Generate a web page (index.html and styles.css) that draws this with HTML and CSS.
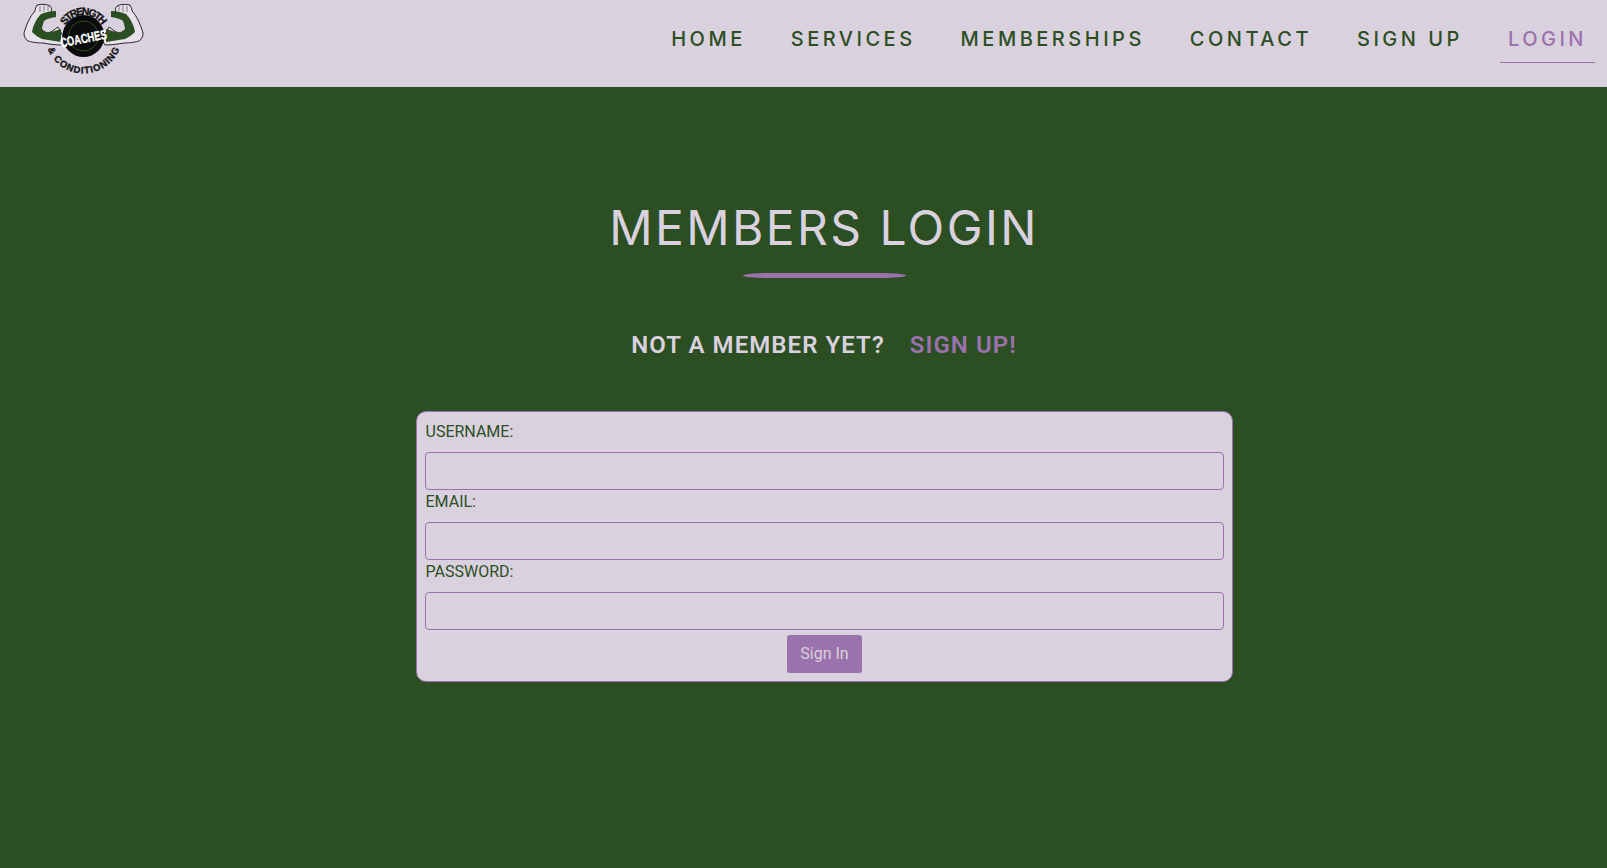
FILE: index.html
```html
<!DOCTYPE html>
<html lang="en">
<head>
<meta charset="utf-8">
<title>Members Login</title>
<link rel="stylesheet" href="styles.css">
</head>
<body>
<header class="site-header">
  <a class="logo" href="#" aria-label="Strength Coaches and Conditioning">
    <svg viewBox="0 0 122 74" width="122" height="74">
      <defs>
        <path id="arc-top" d="M39.5 34 A21 21 0 0 1 81.5 34"/>
        <path id="arc-bottom" d="M22 33 A38 38 0 0 0 99 33"/>
        <g id="arm">
          <path class="arm" d="M14 3 C18 2 24 2 27 4 C29 6 29 9 28 10 C24 12 20 13 17 15 C15 19 14 23 14 26 C18 30 21 32 25 31 C29 30 32 27 35 25 L42 38 L39 43 C32 43 26 42 20 41 C14 41 8 40 5 39 C2 37 1 34 1 31 C3 24 7 14 12 9 C12 7 13 5 14 3 Z"/>
          <path class="muscle" d="M9 30 C10 24 13 17 18 12 C23 10 28 9 33 9 L33 15 C27 16 23 17 21 19 C20 22 19 25 19 27 C22 30 25 31 28 30 C32 29 35 28 38 27 L38 40 C32 39 25 38 19 37 C15 35 12 33 9 30 Z"/>
          <path class="fist-line" d="M17 4 L17 10 M21 3.5 L21 10 M25 4 L25 9"/>
        </g>
      </defs>
      <use href="#arm"/>
      <use href="#arm" transform="translate(121 0) scale(-1 1)"/>
      <circle class="plate" cx="60.5" cy="34" r="21"/>
      <circle class="plate-ring" cx="60.5" cy="34" r="15"/>
      <text class="logo-arc"><textPath href="#arc-top" startOffset="50%" text-anchor="middle" textLength="44">STRENGTH</textPath></text>
      <text class="logo-arc small"><textPath href="#arc-bottom" startOffset="50%" text-anchor="middle" textLength="92">&amp; CONDITIONING</textPath></text>
      <text class="logo-coaches" x="60.5" y="41" text-anchor="middle" textLength="47" lengthAdjust="spacingAndGlyphs" transform="rotate(-11 60.5 37)">COACHES</text>
    </svg>
  </a>
  <nav class="main-nav">
    <a href="#">HOME</a>
    <a href="#">SERVICES</a>
    <a href="#">MEMBERSHIPS</a>
    <a href="#">CONTACT</a>
    <a href="#">SIGN UP</a>
    <a class="active" href="#">LOGIN</a>
  </nav>
</header>
<main class="content">
  <h1 class="page-title">MEMBERS LOGIN</h1>
  <hr class="title-rule">
  <p class="signup-line">NOT A MEMBER YET? <a href="#">SIGN UP!</a></p>
  <form class="login-form">
    <label for="username">USERNAME:</label>
    <input id="username" type="text">
    <label for="email">EMAIL:</label>
    <input id="email" type="email">
    <label for="password">PASSWORD:</label>
    <input id="password" type="password">
    <button type="button">Sign In</button>
  </form>
</main>
</body>
</html>
```
FILE: styles.css
```css
* { box-sizing: border-box; }
html, body { height: 100%; }
body {
  margin: 0;
  background: #2c4e23;
  color: #2c4e23;
  font-family: Roboto, "Liberation Sans", sans-serif;
  overflow: hidden;
}
a { text-decoration: none; color: inherit; }

.site-header {
  height: 87px;
  background: #dad1df;
  display: flex;
  justify-content: space-between;
  align-items: flex-start;
  padding: 2px 12px 0 23px;
}
.logo { display: block; height: 74px; }
.arm { fill: #e6e1ea; stroke: #111; stroke-width: .9; }
.muscle { fill: #2c4e23; }
.fist-line { fill: none; stroke: #333; stroke-width: .6; }
.plate { fill: #0b0b0b; }
.plate-ring { fill: none; stroke: #2c4e23; stroke-width: 1; }
.logo-arc {
  font-family: "Liberation Sans", sans-serif;
  font-weight: 700;
  font-size: 10.5px;
  fill: #111;
  stroke: #111;
  stroke-width: .35;
}
.logo-arc.small { font-size: 9.5px; }
.logo-coaches {
  font-family: "Liberation Sans", sans-serif;
  font-weight: 700;
  font-size: 13px;
  fill: #fff;
  stroke: #fff;
  stroke-width: .4;
}

.main-nav {
  display: flex;
  gap: 29px;
  padding-top: 14px;
  font-family: Inter, sans-serif;
  font-size: 20px;
  font-weight: 500;
  letter-spacing: 3.5px;
}
.main-nav a {
  display: block;
  padding: 8px;
  height: 47px;
  line-height: 31px;
  color: #2c4e23;
  white-space: nowrap;
}
.main-nav a.active {
  color: #9a72ac;
  border-bottom: 1px solid #9a72ac;
}

.content {
  padding: 109px 0 0 41px;
  display: flex;
  flex-direction: column;
  align-items: center;
}
.page-title {
  margin: 0;
  font-family: Inter, sans-serif;
  font-weight: 400;
  font-size: 48px;
  letter-spacing: 2.4px;
  line-height: 64px;
  color: #dad1df;
  white-space: nowrap;
}
.title-rule {
  width: 163px;
  height: 5px;
  margin: 13px 0 0;
  border: 0;
  border-radius: 30px / 3px;
  background: #9a72ac;
}
.signup-line {
  margin: 51px 0 0;
  font-size: 24px;
  line-height: 32px;
  font-weight: 600;
  letter-spacing: 1.05px;
  color: #dad1df;
}
.signup-line a { color: #9a72ac; margin-left: 18px; }

.login-form {
  width: 817px;
  height: 271px;
  margin-top: 50px;
  padding: 8px;
  display: flex;
  flex-direction: column;
  background: #dad1df;
  border: 1px solid #9a72ac;
  border-radius: 10px;
}
.login-form label {
  display: block;
  height: 32px;
  padding-left: 1px;
  font-size: 16px;
  line-height: 24px;
  color: #2c4e23;
}
.login-form input {
  display: block;
  width: 100%;
  height: 38px;
  background: #dad1df;
  border: 1px solid #9a72ac;
  border-radius: 4px;
  outline: 0;
}
.login-form button {
  align-self: center;
  width: 75px;
  height: 38px;
  margin-top: 5px;
  padding: 0 0 2px 1px;
  background: #9a72ac;
  color: #dad1df;
  border: 0;
  border-radius: 3px;
  font-family: inherit;
  font-size: 16px;
}
```
